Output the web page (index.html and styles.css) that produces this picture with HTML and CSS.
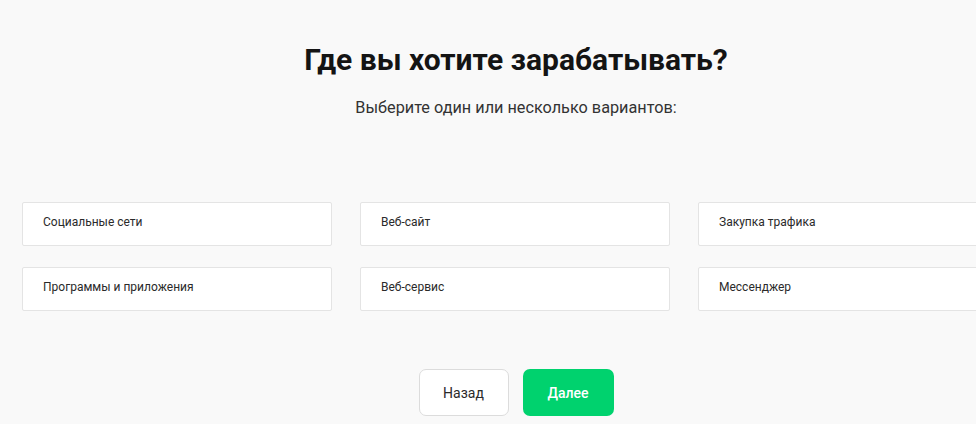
FILE: index.html
```html
<!DOCTYPE html>
<html lang="ru">
<head>
<meta charset="utf-8">
<link rel="stylesheet" href="styles.css">
</head>
<body>
<div class="page">
  <h1 class="title">Где вы хотите зарабатывать?</h1>
  <p class="subtitle">Выберите один или несколько вариантов:</p>
  <div class="options">
    <div class="option">Социальные сети</div>
    <div class="option">Веб-сайт</div>
    <div class="option">Закупка трафика</div>
    <div class="option">Программы и приложения</div>
    <div class="option">Веб-сервис</div>
    <div class="option">Мессенджер</div>
  </div>
  <div class="actions">
    <button class="btn btn-back">Назад</button>
    <button class="btn btn-next">Далее</button>
  </div>
</div>
</body>
</html>
```
FILE: styles.css
```css
html, body {
  margin: 0;
  padding: 0;
  background: #f9f9f9;
  overflow: hidden;
}
body {
  font-family: Roboto, "Liberation Sans", sans-serif;
  color: #1a1a1a;
}
.page {
  width: 1032px;
  box-sizing: border-box;
  padding: 42px 22px 0;
}
.title {
  margin: 0;
  text-align: center;
  font-size: 30px;
  font-weight: 700;
  line-height: 36px;
  color: #141414;
}
.subtitle {
  margin: 20px 0 0;
  text-align: center;
  font-size: 16.25px;
  line-height: 20px;
  color: #333;
}
.options {
  margin-top: 84px;
  display: grid;
  grid-template-columns: repeat(3, 310px);
  column-gap: 28px;
  row-gap: 21px;
}
.option {
  height: 44px;
  box-sizing: border-box;
  background: #fff;
  border: 1px solid #e4e4e4;
  border-radius: 2px;
  padding: 0 20px 4px;
  display: flex;
  align-items: center;
  font-size: 12px;
  color: #2a2a2a;
}
.actions {
  margin-top: 58px;
  display: flex;
  justify-content: center;
  gap: 14px;
}
.btn {
  height: 47px;
  border-radius: 7px;
  font-family: Roboto, "Liberation Sans", sans-serif;
  font-size: 14px;
  box-sizing: border-box;
  cursor: pointer;
}
.btn-back {
  width: 90px;
  background: #fff;
  border: 1px solid #dcdcdc;
  color: #2a2a2a;
}
.btn-next {
  width: 91px;
  background: #00d26e;
  border: none;
  color: #fff;
  font-weight: 500;
}
```
